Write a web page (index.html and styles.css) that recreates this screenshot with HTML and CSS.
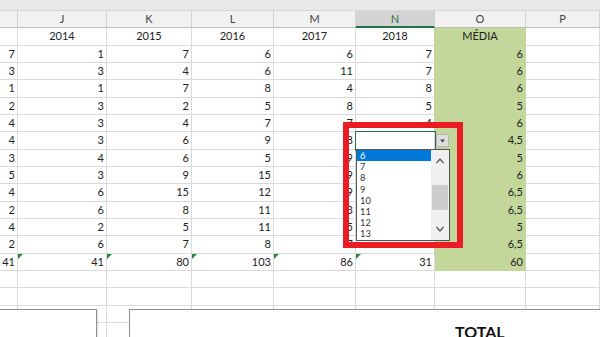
FILE: index.html
```html
<!DOCTYPE html>
<html lang="pt">
<head>
  <meta charset="UTF-8">
  <title>Planilha - médias</title>
  <link rel="stylesheet" href="styles.css">
</head>
<body>
  <div class="sheet">
    <div class="topbar"></div>

    <!-- column letters -->
    <div class="row head">
      <div></div><div>J</div><div>K</div><div>L</div><div>M</div><div class="sel">N</div><div>O</div><div>P</div>
    </div>

    <div class="row">
      <div></div><div class="ctr">2014</div><div class="ctr">2015</div><div class="ctr">2016</div><div class="ctr">2017</div><div class="ctr">2018</div><div class="ctr g">MÉDIA</div><div></div>
    </div>

    <div class="row"><div>7</div><div>1</div><div>7</div><div>6</div><div>6</div><div>7</div><div class="g">6</div><div></div></div>
    <div class="row"><div>3</div><div>3</div><div>4</div><div>6</div><div>11</div><div>7</div><div class="g">6</div><div></div></div>
    <div class="row"><div>1</div><div>1</div><div>7</div><div>8</div><div>4</div><div>8</div><div class="g">6</div><div></div></div>
    <div class="row"><div>2</div><div>3</div><div>2</div><div>5</div><div>8</div><div>5</div><div class="g">5</div><div></div></div>
    <div class="row"><div>4</div><div>3</div><div>4</div><div>7</div><div>7</div><div>4</div><div class="g">6</div><div></div></div>
    <div class="row"><div>4</div><div>3</div><div>6</div><div>9</div><div>8</div><div class="act"></div><div class="g">4,5</div><div></div></div>
    <div class="row"><div>3</div><div>4</div><div>6</div><div>5</div><div>9</div><div></div><div class="g">5</div><div></div></div>
    <div class="row"><div>5</div><div>3</div><div>9</div><div>15</div><div>9</div><div></div><div class="g">6</div><div></div></div>
    <div class="row"><div>4</div><div>6</div><div>15</div><div>12</div><div>9</div><div></div><div class="g">6,5</div><div></div></div>
    <div class="row"><div>2</div><div>6</div><div>8</div><div>11</div><div>3</div><div></div><div class="g">6,5</div><div></div></div>
    <div class="row"><div>4</div><div>2</div><div>5</div><div>11</div><div>5</div><div></div><div class="g">5</div><div></div></div>
    <div class="row"><div>2</div><div>6</div><div>7</div><div>8</div><div>7</div><div></div><div class="g">6,5</div><div></div></div>

    <!-- totals -->
    <div class="row"><div>41</div><div class="e">41</div><div class="e">80</div><div class="e">103</div><div class="e">86</div><div class="e">31</div><div class="g">60</div><div></div></div>

    <div class="row"><div></div><div></div><div></div><div></div><div></div><div></div><div></div><div></div></div>
    <div class="row"><div></div><div></div><div></div><div></div><div></div><div></div><div></div><div></div></div>
    <div class="row"><div></div><div></div><div></div><div></div><div></div><div></div><div></div><div></div></div>
    <div class="row"><div></div><div></div><div></div><div></div><div></div><div></div><div></div><div></div></div>

    <!-- data validation dropdown -->
    <div class="dd-btn">
      <svg width="11" height="11" viewBox="0 0 11 11"><path d="M3 4.5h5l-2.5 3z" fill="#444"/></svg>
    </div>
    <div class="dd-list">
      <div class="dd-items">
        <div class="hi">6</div>
        <div>7</div>
        <div>8</div>
        <div>9</div>
        <div>10</div>
        <div>11</div>
        <div>12</div>
        <div>13</div>
      </div>
      <div class="dd-scroll">
        <svg width="18" height="90" viewBox="0 0 18 90">
          <path d="M5.5 13l3.5-4 3.5 4" fill="none" stroke="#555" stroke-width="1.2"/>
          <rect x="1" y="35" width="16" height="25" fill="#cdcdcd"/>
          <path d="M5.5 77l3.5 4 3.5-4" fill="none" stroke="#555" stroke-width="1.2"/>
        </svg>
      </div>
    </div>

    <div class="callout"></div>

    <!-- shapes drawn over the sheet -->
    <div class="shape shape-a"></div>
    <div class="shape shape-b"><span class="total">TOTAL</span></div>
  </div>
</body>
</html>
```

FILE: styles.css
```css
:root {
  --cols: 18px 89px 85px 82px 82px 79px 91px 74px;
  --grid: #dadada;
  --green: #c4d79b;
}
body {
  margin: 0;
  background: #fff;
  font-family: Lato, "Liberation Sans", sans-serif;
}
.sheet {
  position: relative;
  width: 600px;
  height: 337px;
  overflow: hidden;
}
.topbar {
  height: 11px;
  background: #e9e9e9;
  border-bottom: 1px solid #d6d6d6;
  box-sizing: border-box;
}
.row {
  display: grid;
  grid-template-columns: var(--cols);
  height: 17.33px;
}
.row > div {
  box-sizing: border-box;
  border-right: 1px solid var(--grid);
  border-bottom: 1px solid var(--grid);
  padding-right: 2px;
  text-align: right;
  font-size: 11px;
  line-height: 16px;
  color: #222;
  white-space: nowrap;
  overflow: hidden;
}
.head > div {
  background: #f1f1f1;
  border-right-color: #d2d2d2;
  border-bottom-color: #bdbdbd;
  text-align: center;
  padding-right: 0;
  color: #444;
}
.head > .sel {
  background: #d4d4d4;
  color: #217346;
  border-bottom: 2px solid #217346;
}
.row > .ctr {
  text-align: center;
  padding-right: 0;
}
.row > .g {
  background: var(--green);
  border-right-color: var(--green);
  border-bottom-color: var(--green);
  box-shadow: -1px 0 0 var(--green);
}
.row > .e {
  position: relative;
}
.e::before {
  content: "";
  position: absolute;
  left: 0;
  top: 0;
  border-top: 5px solid #1f8a3a;
  border-right: 5px solid transparent;
}
.row > .act {
  position: relative;
  z-index: 1;
  outline: 1px solid #217346;
}

/* dropdown */
.dd-btn {
  position: absolute;
  left: 436px;
  top: 134px;
  width: 13px;
  height: 13px;
  box-sizing: border-box;
  background: #dedede;
  border: 1px solid #b8b8b8;
  z-index: 2;
}
.dd-btn svg {
  display: block;
}
.dd-list {
  position: absolute;
  left: 356px;
  top: 149px;
  width: 94px;
  height: 92px;
  box-sizing: border-box;
  border: 1px solid #555;
  background: #fff;
  display: flex;
  z-index: 2;
}
.dd-items {
  flex: 1;
  font-size: 9.3px;
  color: #333;
}
.dd-items div {
  height: 11.2px;
  line-height: 11.2px;
  padding-left: 3px;
}
.dd-items .hi {
  background: #0078d7;
  color: #fff;
}
.dd-scroll {
  width: 18px;
  background: #f0f0f0;
}
.dd-scroll svg {
  display: block;
}

.callout {
  position: absolute;
  left: 343px;
  top: 122px;
  width: 120px;
  height: 126px;
  box-sizing: border-box;
  border: 6px solid #ec1c24;
  z-index: 3;
}

.shape {
  position: absolute;
  top: 309px;
  height: 40px;
  box-sizing: border-box;
  background: #fff;
  border: 1.5px solid #8f8f8f;
  box-shadow: 1px 1px 2px rgba(0, 0, 0, 0.15);
}
.shape-a {
  left: -3px;
  width: 100px;
}
.shape-b {
  left: 129px;
  width: 700px;
  padding: 12px 0 0 325px;
}
.total {
  font-weight: 700;
  font-size: 16px;
  line-height: 17px;
  color: #111;
}
```
